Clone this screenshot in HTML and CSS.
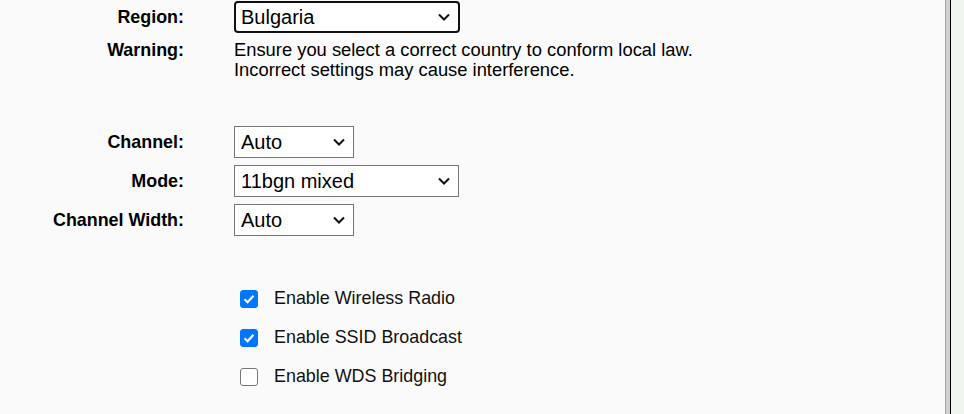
FILE: index.html
```html
<!DOCTYPE html>
<html lang="en">
<head>
<meta charset="utf-8">
<title>Wireless Settings</title>
<link rel="stylesheet" href="styles.css">
</head>
<body>
<div class="page">
  <main class="main">
    <div class="row">
      <div class="label">Region:</div>
      <div class="field">
        <div class="select-wrap sel-region focused">
          <select class="select"><option>Bulgaria</option></select>
          <svg class="chev" width="12" height="8" viewBox="0 0 12 8"><path d="M1 1.5 L6 6.5 L11 1.5" fill="none" stroke="#111" stroke-width="2"/></svg>
        </div>
      </div>
    </div>
    <div class="row row-text">
      <div class="label">Warning:</div>
      <div class="field warn">Ensure you select a correct country to conform local law.<br>Incorrect settings may cause interference.</div>
    </div>

    <div class="row row-channel">
      <div class="label">Channel:</div>
      <div class="field">
        <div class="select-wrap sel-small">
          <select class="select"><option>Auto</option></select>
          <svg class="chev" width="12" height="8" viewBox="0 0 12 8"><path d="M1 1.5 L6 6.5 L11 1.5" fill="none" stroke="#111" stroke-width="2"/></svg>
        </div>
      </div>
    </div>
    <div class="row">
      <div class="label">Mode:</div>
      <div class="field">
        <div class="select-wrap sel-mode">
          <select class="select"><option>11bgn mixed</option></select>
          <svg class="chev" width="12" height="8" viewBox="0 0 12 8"><path d="M1 1.5 L6 6.5 L11 1.5" fill="none" stroke="#111" stroke-width="2"/></svg>
        </div>
      </div>
    </div>
    <div class="row">
      <div class="label">Channel Width:</div>
      <div class="field">
        <div class="select-wrap sel-small">
          <select class="select"><option>Auto</option></select>
          <svg class="chev" width="12" height="8" viewBox="0 0 12 8"><path d="M1 1.5 L6 6.5 L11 1.5" fill="none" stroke="#111" stroke-width="2"/></svg>
        </div>
      </div>
    </div>

    <div class="checks">
      <label class="check">
        <span class="box checked"><svg width="12" height="10" viewBox="0 0 12 10"><path d="M1.5 5.2 L4.6 8.2 L10.5 1.8" fill="none" stroke="#fff" stroke-width="2.2"/></svg></span>
        <span class="check-text">Enable Wireless Radio</span>
      </label>
      <label class="check">
        <span class="box checked"><svg width="12" height="10" viewBox="0 0 12 10"><path d="M1.5 5.2 L4.6 8.2 L10.5 1.8" fill="none" stroke="#fff" stroke-width="2.2"/></svg></span>
        <span class="check-text">Enable SSID Broadcast</span>
      </label>
      <label class="check">
        <span class="box"></span>
        <span class="check-text">Enable WDS Bridging</span>
      </label>
    </div>
  </main>
  <div class="divider"></div>
  <aside class="side"></aside>
</div>
</body>
</html>
```

FILE: styles.css
```css
html, body {
  margin: 0;
  padding: 0;
  height: 100%;
}

body {
  font-family: "Liberation Sans", Arial, sans-serif;
  color: #000;
  background: #fafafa;
}

.page {
  display: flex;
  height: 100vh;
  overflow: hidden;
}

.main {
  flex: 0 0 945px;
  background: #fafafa;
  padding-top: 1px;
  box-sizing: border-box;
}

.divider {
  flex: 0 0 4px;
  background: #d0d0d0;
  border-left: 1px solid #a3a3a3;
  border-right: 1px solid #000;
}

.side {
  flex: 1;
  background: #eef6ef;
}

.row {
  display: flex;
  align-items: center;
  min-height: 32px;
  margin-bottom: 7px;
}

.row-text {
  align-items: baseline;
  margin-bottom: 46px;
}

.label {
  flex: 0 0 184px;
  text-align: right;
  font-weight: bold;
  font-size: 17.9px;
}

.field {
  margin-left: 50px;
}

.warn {
  font-size: 18.35px;
  line-height: 20px;
}

.select-wrap {
  position: relative;
  height: 32px;
  box-sizing: border-box;
  background: #fff;
  border: 1px solid #767676;
}

.select-wrap.focused {
  border: 2px solid #111;
  border-radius: 4px;
}

.sel-region { width: 226px; }
.sel-mode { width: 225px; }
.sel-small { width: 120px; }

.select {
  appearance: none;
  -webkit-appearance: none;
  border: 0;
  outline: none;
  background: transparent;
  width: 100%;
  height: 100%;
  margin: 0;
  padding: 0 0 0 6px;
  font-family: inherit;
  font-size: 20px;
  color: #000;
}

.focused .select {
  padding-left: 5px;
}

.chev {
  position: absolute;
  right: 8px;
  top: 50%;
  margin-top: -4px;
  pointer-events: none;
}

.checks {
  margin-top: 43px;
  padding-left: 240px;
}

.check {
  display: flex;
  align-items: center;
  height: 39px;
}

.box {
  width: 18px;
  height: 18px;
  box-sizing: border-box;
  border: 1.5px solid #767676;
  border-radius: 3px;
  background: #fff;
  display: flex;
  align-items: center;
  justify-content: center;
}

.box.checked {
  background: #0075ff;
  border-color: #0075ff;
}

.check-text {
  margin-left: 16px;
  font-size: 17.9px;
  color: #111;
}
```
